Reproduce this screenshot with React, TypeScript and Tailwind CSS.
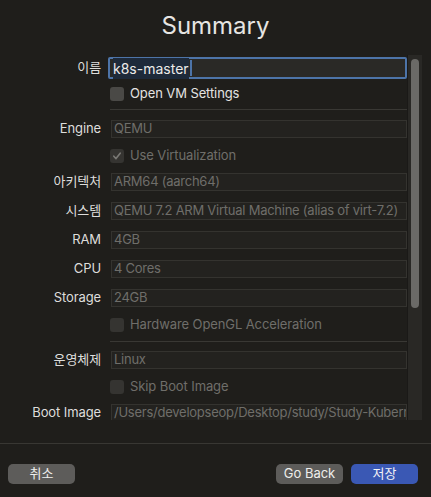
import React from "react";

const font = { fontFamily: '"Inter", "Noto Sans CJK KR", sans-serif' };

function Label({ children }: { children: React.ReactNode }) {
  return (
    <div className="w-[101px] shrink-0 text-right text-[13px] tracking-[-0.1px] text-[#dedddb]">
      {children}
    </div>
  );
}

function Field({ label, value, className = "" }: { label: string; value: string; className?: string }) {
  return (
    <div className={`flex h-[18px] items-center gap-[10px] ${className}`}>
      <Label>{label}</Label>
      <div className="flex h-[18px] w-[296px] items-center overflow-hidden whitespace-nowrap border border-[#34332f] bg-[#23221f] pl-[2px] text-[13px] tracking-[-0.25px] text-[#6f6e6a]">
        {value}
      </div>
    </div>
  );
}

function Check({ label, checked = false, enabled = false, className = "" }: { label: string; checked?: boolean; enabled?: boolean; className?: string }) {
  return (
    <div className={`flex items-center pl-[110px] ${className}`}>
      <div
        className={`flex h-[14px] w-[14px] items-center justify-center rounded-[3px] ${
          enabled ? "bg-[#4a4946]" : "bg-[#353431]"
        }`}
      >
        {checked && (
          <svg width="10" height="10" viewBox="0 0 10 10">
            <path d="M1.8 5.2 L4 7.6 L8.2 2.2" fill="none" stroke="#7a7975" strokeWidth="1.6" strokeLinecap="round" strokeLinejoin="round" />
          </svg>
        )}
      </div>
      <span className={`ml-[6px] text-[13px] tracking-[-0.1px] ${enabled ? "text-[#e4e3e1]" : "text-[#6f6e6a]"}`}>{label}</span>
    </div>
  );
}

function Sep({ className = "" }: { className?: string }) {
  return <div className={`ml-[110px] h-px w-[297px] bg-[#393834] ${className}`} />;
}

export default function App() {
  return (
    <div className="flex h-[497px] w-[431px] flex-col bg-[#1f1e1b]" style={font}>
      <div className="flex h-[55px] items-start justify-center pt-[10px] text-[24px] leading-[32px] text-[#e6e5e3]">
        Summary
      </div>

      <div className="flex h-[365px] overflow-hidden">
        <div className="w-[407px] shrink-0 pt-[2px]">
          <div className="flex h-[22px] items-center gap-[7px]">
            <Label>이름</Label>
            <div className="flex h-[22px] w-[299px] items-center rounded-[2px] border-[2px] border-[#4d74a8] bg-[#2a2926] pl-[3px] text-[14px] text-[#ecebe9]">
              <span className="bg-[#1e2a3a]">k8s-master</span>
              <span className="ml-px h-[16px] w-[2px] bg-[#4d74a8]" />
            </div>
          </div>
          <Check label="Open VM Settings" enabled className="h-[29px]" />
          <Sep className="mt-px" />

          <Field label="Engine" value="QEMU" className="mt-[10px]" />
          <Check label="Use Virtualization" checked className="mt-[5px] h-[26px]" />
          <Field label="아키텍처" value="ARM64 (aarch64)" className="mt-[4px]" />
          <Field label="시스템" value="QEMU 7.2 ARM Virtual Machine (alias of virt-7.2)" className="mt-[11px]" />
          <Field label="RAM" value="4GB" className="mt-[11px]" />
          <Field label="CPU" value="4 Cores" className="mt-[11px]" />
          <Field label="Storage" value="24GB" className="mt-[11px]" />
          <Check label="Hardware OpenGL Acceleration" className="mt-[5px] h-[26px]" />
          <Sep className="mt-[3px]" />
          <Field label="운영체제" value="Linux" className="mt-[9px]" />
          <Check label="Skip Boot Image" className="mt-[5px] h-[26px]" />
          <Field
            label="Boot Image"
            value="/Users/developseop/Desktop/study/Study-Kubernetes/images/ubuntu.iso"
            className="mt-[4px]"
          />
        </div>
        <div className="w-[15px] shrink-0 border-l border-[#1a1917] bg-[#292825] pl-[3px] pt-[4px]">
          <div className="h-[249px] w-[8px] rounded-full bg-[#6b6a67]" />
        </div>
      </div>

      <div className="mt-[23px] h-px w-full bg-[#383733]" />

      <div className="flex items-center px-[8px] pt-[20px] pr-[13px]">
        <button className="h-[20px] w-[67px] rounded-[5px] bg-[#5d5c5a] text-[13px] text-[#eeeeec]">취소</button>
        <div className="flex-1" />
        <button className="h-[20px] w-[67px] rounded-[5px] bg-[#5d5c5a] text-[13px] text-[#eeeeec]">Go Back</button>
        <button className="ml-[8px] h-[20px] w-[67px] rounded-[5px] bg-[#3a58b4] text-[13px] text-[#f2f2f4]">저장</button>
      </div>
    </div>
  );
}
